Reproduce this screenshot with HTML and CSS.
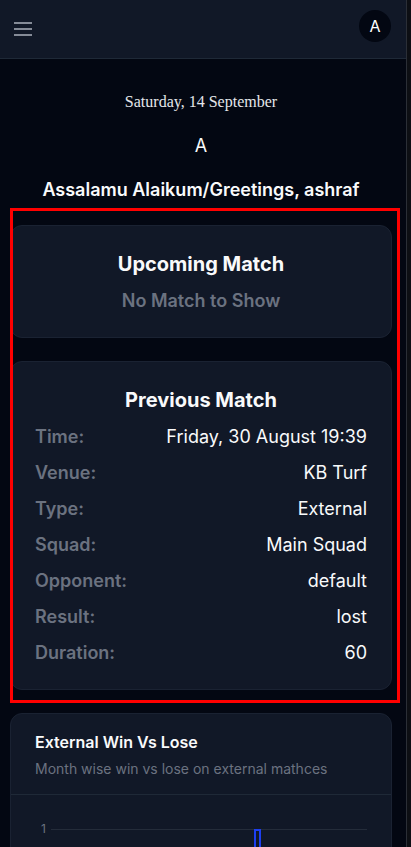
FILE: index.html
```html
<!DOCTYPE html>
<html lang="en">
<head>
    <meta charset="UTF-8">
    <meta name="viewport" content="width=device-width, initial-scale=1.0">
    <title>Dashboard</title>
    <link rel="stylesheet" href="styles.css">
</head>
<body>
    <div class="app">
        <header class="topbar">
            <button class="menu-btn" aria-label="Menu">
                <svg width="24" height="24" viewBox="0 0 24 24" fill="none" stroke="#858b97" stroke-width="2">
                    <path d="M3 6h18M3 12h18M3 18h18"/>
                </svg>
            </button>
            <div class="avatar">A</div>
        </header>

        <main class="content">
            <p class="date">Saturday, 14 September</p>
            <p class="initial">A</p>
            <h2 class="greeting">Assalamu Alaikum/Greetings, ashraf</h2>

            <div class="highlight">
                <div class="highlight-frame"></div>

                <section class="card match-card">
                    <h3 class="card-title">Upcoming Match</h3>
                    <p class="empty">No Match to Show</p>
                </section>

                <section class="card match-card">
                    <h3 class="card-title">Previous Match</h3>
                    <div class="row"><span class="label">Time:</span><span class="value">Friday, 30 August 19:39</span></div>
                    <div class="row"><span class="label">Venue:</span><span class="value">KB Turf</span></div>
                    <div class="row"><span class="label">Type:</span><span class="value">External</span></div>
                    <div class="row"><span class="label">Squad:</span><span class="value">Main Squad</span></div>
                    <div class="row"><span class="label">Opponent:</span><span class="value">default</span></div>
                    <div class="row"><span class="label">Result:</span><span class="value">lost</span></div>
                    <div class="row"><span class="label">Duration:</span><span class="value">60</span></div>
                </section>
            </div>

            <section class="card chart-card">
                <div class="chart-head">
                    <h3 class="chart-title">External Win Vs Lose</h3>
                    <p class="chart-sub">Month wise win vs lose on external mathces</p>
                </div>
                <div class="chart-body">
                    <div class="grid-line">
                        <span class="tick">1</span>
                        <span class="rule"></span>
                    </div>
                    <div class="bar" style="left: 243px"></div>
                </div>
            </section>
        </main>
    </div>
</body>
</html>
```

FILE: styles.css
```css
html, body {
    margin: 0;
    padding: 0;
}

body {
    font-family: Inter, "Noto Sans", sans-serif;
    background: #0d0f14;
    color: #f9fafb;
    height: 847px;
    overflow: hidden;
}

.app {
    width: 406px;
    min-height: 847px;
    background: #030712;
    border-right: 1px solid #2b2f37;
}

.topbar {
    height: 58px;
    background: #111827;
    border-bottom: 1px solid #1f2937;
    display: flex;
    align-items: center;
    justify-content: space-between;
    padding: 0 15px 0 11px;
}

.menu-btn {
    background: none;
    border: none;
    padding: 0;
    width: 24px;
    height: 24px;
    display: flex;
}

.avatar {
    width: 32px;
    height: 32px;
    border-radius: 50%;
    background: #030712;
    color: #fff;
    font-size: 16px;
    display: flex;
    align-items: center;
    justify-content: center;
    margin-top: -6px;
}

.content {
    padding: 31px 14px 0 10px;
}

.date {
    font-family: "Liberation Serif", serif;
    font-size: 16px;
    line-height: 24px;
    text-align: center;
    color: #e5e7eb;
    margin: 0;
}

.initial {
    font-size: 18px;
    line-height: 24px;
    text-align: center;
    margin: 20px 0 0;
}

.greeting {
    font-size: 18px;
    line-height: 28px;
    font-weight: 600;
    text-align: center;
    margin: 18px 0 0;
}

.highlight {
    position: relative;
    margin-top: 21px;
    display: flex;
    flex-direction: column;
    gap: 23px;
}

.highlight-frame {
    position: absolute;
    top: -17px;
    left: 0;
    right: -8px;
    bottom: -13px;
    border: 3px solid #ff0000;
    pointer-events: none;
    z-index: 2;
}

.card {
    background: #111827;
    border: 1px solid #1a2232;
    border-radius: 12px;
}

.match-card {
    padding: 24px 24px 22px;
    display: flex;
    flex-direction: column;
    gap: 8px;
}

.card-title {
    margin: 0 0 1px;
    font-size: 20px;
    line-height: 28px;
    font-weight: 700;
    text-align: center;
}

.empty {
    margin: 0;
    font-size: 18px;
    line-height: 28px;
    font-weight: 600;
    text-align: center;
    color: #6b7280;
}

.row {
    display: flex;
    justify-content: space-between;
    font-size: 18px;
    line-height: 28px;
}

.label {
    color: #6b7280;
    font-weight: 600;
}

.value {
    color: #f9fafb;
}

.chart-card {
    margin-top: 23px;
    height: 200px;
}

.chart-head {
    padding: 16px 24px 15px;
    border-bottom: 1px solid #1f2937;
}

.chart-title {
    margin: 0;
    font-size: 16px;
    line-height: 24px;
    font-weight: 600;
}

.chart-sub {
    margin: 5px 0 0;
    font-size: 14px;
    line-height: 20px;
    color: #6b7280;
}

.chart-body {
    position: relative;
    padding: 26px 24px 0 30px;
}

.grid-line {
    display: flex;
    align-items: center;
    gap: 5px;
}

.tick {
    font-size: 12px;
    line-height: 16px;
    color: #6b7280;
}

.rule {
    flex: 1;
    height: 1px;
    background: #242c3a;
}

.bar {
    position: absolute;
    top: 34px;
    width: 3px;
    height: 60px;
    border: 2px solid #1d3ff0;
    border-bottom: none;
    background: #111827;
}
```
